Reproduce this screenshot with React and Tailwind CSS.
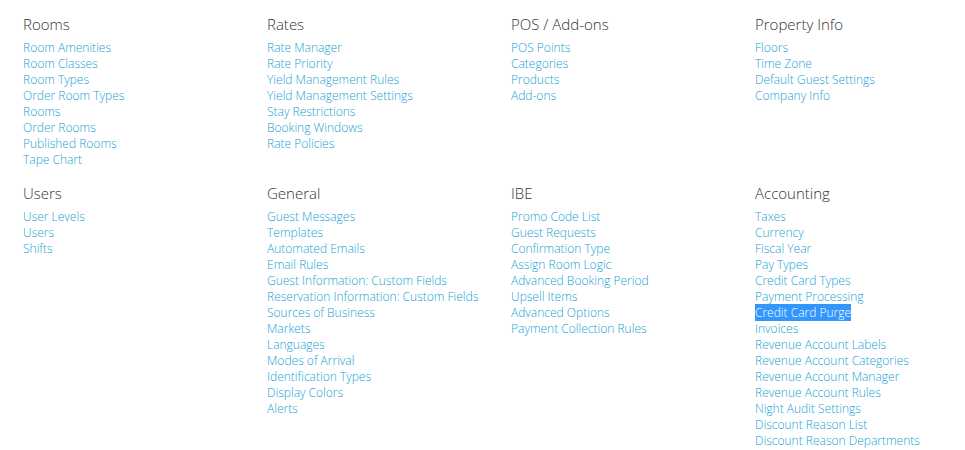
import React from "react";

const sections = [
  {
    title: "Rooms",
    links: ["Room Amenities", "Room Classes", "Room Types", "Order Room Types", "Rooms", "Order Rooms", "Published Rooms", "Tape Chart"],
  },
  {
    title: "Rates",
    links: ["Rate Manager", "Rate Priority", "Yield Management Rules", "Yield Management Settings", "Stay Restrictions", "Booking Windows", "Rate Policies"],
  },
  {
    title: "POS / Add-ons",
    links: ["POS Points", "Categories", "Products", "Add-ons"],
  },
  {
    title: "Property Info",
    links: ["Floors", "Time Zone", "Default Guest Settings", "Company Info"],
  },
  {
    title: "Users",
    links: ["User Levels", "Users", "Shifts"],
  },
  {
    title: "General",
    links: [
      "Guest Messages",
      "Templates",
      "Automated Emails",
      "Email Rules",
      "Guest Information: Custom Fields",
      "Reservation Information: Custom Fields",
      "Sources of Business",
      "Markets",
      "Languages",
      "Modes of Arrival",
      "Identification Types",
      "Display Colors",
      "Alerts",
    ],
  },
  {
    title: "IBE",
    links: ["Promo Code List", "Guest Requests", "Confirmation Type", "Assign Room Logic", "Advanced Booking Period", "Upsell Items", "Advanced Options", "Payment Collection Rules"],
  },
  {
    title: "Accounting",
    links: [
      "Taxes",
      "Currency",
      "Fiscal Year",
      "Pay Types",
      "Credit Card Types",
      "Payment Processing",
      "Credit Card Purge",
      "Invoices",
      "Revenue Account Labels",
      "Revenue Account Categories",
      "Revenue Account Manager",
      "Revenue Account Rules",
      "Night Audit Settings",
      "Discount Reason List",
      "Discount Reason Departments",
    ],
  },
];

const Section = ({ title, links }) => (
  <div>
    <h2 className="text-[15px] leading-5 font-light text-[#333]">{title}</h2>
    <ul className="mt-[6px]">
      {links.map((l) => (
        <li key={l} className="text-[12px] leading-4 font-light text-[#1ba1d6]">
          {l === "Credit Card Purge" ? (
            <span className="bg-[#3297fd] text-white">{l}</span>
          ) : (
            <a href="#" onClick={(e) => e.preventDefault()}>{l}</a>
          )}
        </li>
      ))}
    </ul>
  </div>
);

export default function App() {
  return (
    <div className="min-h-[450px] bg-white pl-[23px] pt-[14px] font-['Open_Sans',sans-serif]">
      <div className="grid grid-cols-[244px_244px_244px_244px] gap-y-[15px]">
        {sections.map((s) => (
          <Section key={s.title} {...s} />
        ))}
      </div>
    </div>
  );
}
